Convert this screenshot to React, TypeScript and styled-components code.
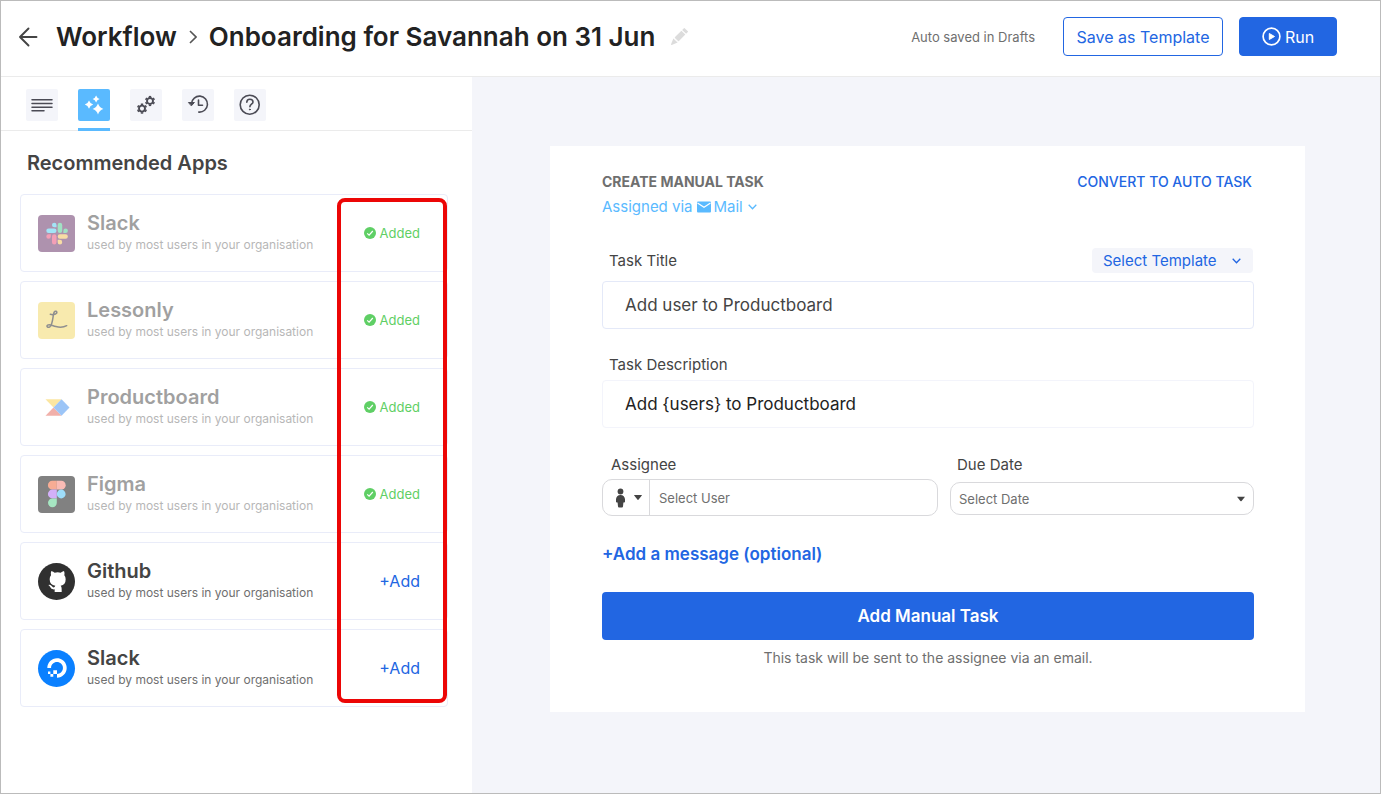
import React from 'react';
import styled, { createGlobalStyle, css } from 'styled-components';
import { BsPencilFill } from 'react-icons/bs';
import { FaDigitalOcean } from 'react-icons/fa';

const color = {
  ink: '#222222',
  dark: '#444444',
  mid: '#6f6f6f',
  blue: '#2266e2',
  sky: '#5abaff',
  green: '#5fcf65',
  page: '#f4f5fa',
  line: '#ebebeb',
  cardLine: '#e9ecf9',
  red: '#ec0606',
};

const GlobalStyle = createGlobalStyle`
  *, *::before, *::after { box-sizing: border-box; }
  body { margin: 0; font-family: Inter, "Open Sans", sans-serif; color: ${color.dark}; background: #fff; }
  h1, h2, h3, p, ul { margin: 0; padding: 0; }
  ul { list-style: none; }
  svg { display: block; flex: none; }
  button, input, select { font: inherit; color: inherit; margin: 0; }
  button { cursor: pointer; }
`;

const Page = styled.div`
  display: flex;
  flex-direction: column;
  min-height: 100vh;
  border: 1px solid #bbbbbb;
`;

/* Header */

const Header = styled.header`
  display: flex;
  align-items: center;
  padding: 16px 43px 20px 17px;
  border-bottom: 1px solid ${color.line};
`;

const IconButton = styled.button`
  display: flex;
  padding: 0;
  border: 0;
  background: none;
  color: ${(p) => p.color ?? color.dark};
`;

const Title = styled.h1`
  display: flex;
  align-items: center;
  gap: 12px;
  margin: 0 16px 0 18px;
  font-size: 26px;
  line-height: 32px;
  font-weight: 600;
  color: ${color.ink};
  white-space: nowrap;
`;

const SaveState = styled.p`
  margin-left: auto;
  font-size: 13px;
  line-height: 20px;
  color: ${color.mid};
`;

const HeaderButton = styled.button<{ $primary?: boolean }>`
  display: flex;
  align-items: center;
  justify-content: center;
  gap: 4px;
  height: 39px;
  border: 1px solid ${color.blue};
  border-radius: 4px;
  font-size: 16px;
  white-space: nowrap;
  ${(p) =>
    p.$primary
      ? css`
          width: 98px;
          margin-left: 16px;
          background: ${color.blue};
          color: #fff;
        `
      : css`
          width: 160px;
          margin-left: 28px;
          background: #fff;
          color: ${color.blue};
        `}
`;

/* Body */

const Body = styled.div`
  display: flex;
  flex: 1;
`;

const Sidebar = styled.aside`
  flex: 0 0 471px;
  background: #fff;
`;

const Tabs = styled.nav`
  display: flex;
  gap: 20px;
  padding: 12px 25px 0;
  border-bottom: 1px solid ${color.line};
`;

const Tab = styled.button<{ $active?: boolean }>`
  padding: 0 0 7px;
  margin-bottom: -1px;
  border: 0;
  border-bottom: 3px solid ${(p) => (p.$active ? color.sky : 'transparent')};
  background: none;
  color: ${(p) => (p.$active ? '#fff' : '#4b4b55')};
`;

const TabTile = styled.span<{ $active?: boolean }>`
  display: flex;
  width: 32px;
  height: 32px;
  border-radius: 2px;
  background: ${(p) => (p.$active ? color.sky : color.page)};
`;

const SidebarTitle = styled.h2`
  padding: 20px 26px 18px;
  font-size: 20px;
  line-height: 25px;
  font-weight: 600;
`;

const AppListFrame = styled.div`
  position: relative;
  margin: 0 24px 24px 19px;
`;

const AppList = styled.ul`
  display: grid;
  gap: 9px;
`;

const AppCard = styled.li`
  display: flex;
  align-items: center;
  height: 78px;
  padding: 0 27px 0 17px;
  border: 1px solid ${color.cardLine};
  border-radius: 4px;
`;

const AppInfo = styled.div<{ $faded: boolean }>`
  display: flex;
  flex: 1;
  align-items: center;
  gap: 12px;
  opacity: ${(p) => (p.$faded ? 0.5 : 1)};
`;

const AppName = styled.h3`
  font-size: 20px;
  line-height: 24px;
  font-weight: 600;
`;

const AppNote = styled.p`
  font-size: 12px;
  line-height: 20px;
  color: ${color.mid};
`;

const Added = styled.span`
  display: flex;
  align-items: center;
  gap: 4px;
  font-size: 13px;
  color: ${color.green};
`;

const AddButton = styled.button`
  padding: 0;
  border: 0;
  background: none;
  font-size: 16px;
  color: ${color.blue};
`;

const Highlight = styled.div`
  position: absolute;
  top: 4px;
  right: 1px;
  bottom: 4px;
  width: 110px;
  border: 4px solid ${color.red};
  border-radius: 8px;
  pointer-events: none;
`;

/* Task form */

const Main = styled.main`
  flex: 1;
  padding: 69px 75px 69px 78px;
  background: ${color.page};
`;

const TaskCard = styled.form`
  display: flex;
  flex-direction: column;
  padding: 26px 51px 44px 52px;
  background: #fff;
  line-height: 20px;
  font-size: 14px;
`;

const Row = styled.div`
  display: flex;
  align-items: center;
  justify-content: space-between;
`;

const CardTitle = styled.h2`
  font-size: 14px;
  font-weight: 700;
  color: ${color.mid};
`;

const ConvertLink = styled.a`
  padding-right: 2px;
  font-weight: 500;
  color: ${color.blue};
  text-decoration: none;
`;

const AssignedVia = styled.label`
  display: flex;
  align-items: center;
  gap: 4px;
  margin-top: 5px;
  font-size: 15px;
  color: ${color.sky};
`;

const MailPicker = styled.span`
  position: relative;
  display: flex;
  align-items: center;
  gap: 3px;
`;

const BareSelect = styled.select`
  appearance: none;
  width: 100%;
  height: 100%;
  padding: 0;
  border: 0;
  background: none;
  outline-offset: 2px;
`;

const MailSelect = styled(BareSelect)`
  width: 44px;
  height: 20px;
`;

const MailMark = styled.span`
  position: absolute;
  right: 1px;
  pointer-events: none;
`;

const TitleRow = styled(Row)`
  margin: 31px 1px 8px 7px;
`;

const FieldLabel = styled.label`
  display: block;
  padding-left: 7px;
  font-size: 15px;
  color: ${color.dark};
`;

const TitleLabel = styled(FieldLabel)`
  padding-left: 0;
`;

const TemplatePicker = styled.div`
  position: relative;
  width: 161px;
  height: 25px;
  border-radius: 4px;
  background: ${color.page};
  font-size: 15px;
  color: ${color.blue};
`;

const TemplateSelect = styled(BareSelect)`
  padding: 0 32px 0 11px;
`;

const PickerMark = styled.span`
  position: absolute;
  right: 8px;
  top: 50%;
  transform: translateY(-50%);
  pointer-events: none;
`;

const TemplateMark = styled(PickerMark)`
  right: 12px;
`;

const TextBox = styled.input<{ $strong?: boolean }>`
  width: 100%;
  height: 48px;
  padding: 0 22px;
  border: 1px solid ${(p) => (p.$strong ? '#f3f4fb' : '#e4e9f8')};
  border-radius: 4px;
  background: #fff;
  font-size: 17px;
  color: ${(p) => (p.$strong ? color.ink : color.dark)};
`;

const DescriptionField = styled.div`
  display: grid;
  gap: 5px;
  margin-top: 26px;
`;

const Columns = styled.div`
  display: grid;
  grid-template-columns: 336fr 304fr;
  gap: 12px;
  margin-top: 27px;
`;

const Column = styled.div`
  display: flex;
  flex-direction: column;
  justify-content: space-between;
  gap: 4px;
`;

const AssigneeLabel = styled(FieldLabel)`
  padding-left: 9px;
`;

const AssigneeBox = styled.div`
  display: flex;
  height: 37px;
  border: 1px solid #d9d9dc;
  border-radius: 10px;
  overflow: hidden;
`;

const KindButton = styled.button`
  display: flex;
  flex: none;
  align-items: center;
  gap: 8px;
  width: 47px;
  padding: 0 0 0 12px;
  border: 0;
  border-right: 1px solid #d9d9dc;
  background: none;
`;

const UserInput = styled.input`
  flex: 1;
  min-width: 0;
  padding: 0 9px;
  border: 0;
  background: none;
  font-size: 13px;
  &::placeholder { color: ${color.mid}; opacity: 1; }
`;

const DateBox = styled.div`
  position: relative;
  height: 33px;
  margin-bottom: 1px;
  border: 1px solid #d9d9dc;
  border-radius: 10px;
  font-size: 13px;
  color: ${color.mid};
`;

const DateSelect = styled(BareSelect)`
  padding: 0 28px 0 8px;
`;

const MessageButton = styled.button`
  align-self: flex-start;
  margin: 28px 0;
  padding: 0;
  border: 0;
  background: none;
  font-size: 17px;
  line-height: 20px;
  font-weight: 600;
  color: ${color.blue};
`;

const SubmitButton = styled.button`
  height: 48px;
  border: 0;
  border-radius: 4px;
  background: ${color.blue};
  font-size: 17px;
  font-weight: 600;
  color: #fff;
`;

const FormNote = styled.p`
  margin-top: 8px;
  text-align: center;
  color: ${color.mid};
`;

/* Icons */

const BackIcon = () => (
  <svg width="20" height="20" viewBox="0 0 20 20" fill="none" stroke="currentColor" strokeWidth="1.900" strokeLinecap="round" strokeLinejoin="round">
    <path d="M18.500 10H2M10.500 1.500 2 10l8.500 8.500" />
  </svg>
);

const CrumbIcon = () => (
  <svg width="8" height="14" viewBox="0 0 8 14" fill="none" stroke="#555" strokeWidth="1.600">
    <path d="M1 1l6 6-6 6" />
  </svg>
);

const PlayIcon = () => (
  <svg width="19" height="19" viewBox="0 0 19 19">
    <circle cx="9.500" cy="9.500" r="8.400" fill="none" stroke="#fff" strokeWidth="1.700" />
    <path d="M7.300 6.500v6l5.200-3z" fill="#fff" stroke="#fff" strokeLinejoin="round" />
  </svg>
);

const LinesIcon = () => (
  <svg width="32" height="32" viewBox="0 0 32 32" fill="none" stroke="currentColor" strokeWidth="1.500" strokeLinecap="round">
    <path d="M6 10.800h20M6 14.500h20M6 18.300h20M6 21.800h12" />
  </svg>
);

const star = (x: number, y: number, r: number) => {
  const k = r * 0.25;
  return `M${x} ${y - r}Q${x + k} ${y - k} ${x + r} ${y}Q${x + k} ${y + k} ${x} ${y + r}Q${x - k} ${y + k} ${x - r} ${y}Q${x - k} ${y - k} ${x} ${y - r}Z`;
};

const SparkleIcon = () => (
  <svg width="32" height="32" viewBox="0 0 32 32" fill="currentColor">
    <path d={star(20, 20, 5.4) + star(11, 15.6, 4.2) + star(18.1, 10, 3.5)} />
  </svg>
);

const Gear = ({ x, y }: { x: number; y: number }) => (
  <g transform={`translate(${x} ${y})`} stroke="currentColor" fill="none">
    <circle r="3" strokeWidth="1.900" />
    {[0, 60, 120, 180, 240, 300].map((a) => (
      <path key={a} d="M0-3.600V-5.100" strokeWidth="2.400" transform={`rotate(${a})`} />
    ))}
  </g>
);

const GearsIcon = () => (
  <svg width="32" height="32" viewBox="0 0 32 32">
    <Gear x={20} y={12} />
    <Gear x={12} y={19.6} />
  </svg>
);

const HistoryIcon = () => (
  <svg width="32" height="32" viewBox="0 0 32 32" fill="none" stroke="currentColor" strokeWidth="1.600" strokeLinecap="round" strokeLinejoin="round">
    <path d="M9.500 14.500a8 8 0 1 1 7.300 8.600M16.500 11v5.300h4" />
    <path d="M6.800 13.500h5.600l-2.800 3.100z" fill="currentColor" strokeWidth="1" />
  </svg>
);

const HelpIcon = () => (
  <svg width="32" height="32" viewBox="0 0 32 32" fill="none" stroke="currentColor" strokeWidth="1.600" strokeLinecap="round">
    <circle cx="15.700" cy="15.700" r="9.500" />
    <path d="M12.800 13.300c0-4.200 6.200-3.900 6.200-.3 0 2.200-3.100 2.300-3.100 4.700" />
    <circle cx="15.900" cy="20.500" r=".5" fill="currentColor" strokeWidth="1" />
  </svg>
);

const CheckIcon = () => (
  <svg width="12" height="12" viewBox="0 0 12 12">
    <circle cx="6" cy="6" r="6" fill={color.green} />
    <path d="M3.200 6.300l1.900 1.900 3.700-4.200" fill="none" stroke="#fff" strokeWidth="1.200" />
  </svg>
);

const MailIcon = () => (
  <svg width="14" height="12" viewBox="0 0 14 12">
    <rect y=".5" width="14" height="11" rx="1" fill="currentColor" />
    <path d="M.5 2 7 6.200 13.500 2" fill="none" stroke="#fff" strokeWidth="1.200" />
  </svg>
);

const ChevronIcon = () => (
  <svg width="9" height="6" viewBox="0 0 9 6" fill="none" stroke="currentColor" strokeWidth="1.300">
    <path d="M.7.800l3.800 3.900L8.300.8" />
  </svg>
);

const CaretIcon = () => (
  <svg width="8" height="5" viewBox="0 0 8 5" fill={color.dark}>
    <path d="M.4 0h7.200q.5 0 .2.500L4.400 4.700q-.4.400-.8 0L.2.500Q-.1 0 .4 0z" />
  </svg>
);

const PersonIcon = () => (
  <svg width="11" height="20" viewBox="0 0 11 20" fill={color.dark}>
    <circle cx="5.500" cy="3.500" r="2.900" />
    <path d="M5.500 7C2.800 7 1 9 1 11.300v2.500c0 .8.900 1 1.600.6l.4 4.100q.1.900 1 .9h3q.9 0 1-.9l.4-4.100c.7.400 1.600.2 1.600-.6v-2.500C10 9 8.200 7 5.500 7z" />
  </svg>
);

const SlackLogo = () => (
  <svg width="37" height="37" viewBox="0 0 37 37">
    <rect width="37" height="37" rx="4" fill="#5f2860" />
    <g transform="translate(8.300 7.800) scale(.9)">
      <path fill="#e8416f" d="M5.042 15.165a2.528 2.528 0 0 1-2.520 2.523A2.528 2.528 0 0 1 0 15.165a2.527 2.527 0 0 1 2.522-2.520h2.520zM6.313 15.165a2.521 2.521 0 0 1 5.042 0v6.313a2.521 2.521 0 0 1-5.042 0z" />
      <path fill="#48cdf0" d="M8.834 5.042a2.521 2.521 0 1 1 2.521-2.520v2.520zM8.834 6.313a2.521 2.521 0 0 1 0 5.042H2.522a2.521 2.521 0 0 1 0-5.042z" />
      <path fill="#46c78b" d="M18.956 8.834a2.522 2.522 0 1 1 2.522 2.521h-2.522zM17.688 8.834a2.523 2.523 0 0 1-5.043 0V2.522a2.522 2.522 0 0 1 5.043 0z" />
      <path fill="#f2bd4e" d="M15.165 18.956a2.522 2.522 0 1 1-2.520 2.522v-2.522zM15.165 17.688a2.522 2.522 0 0 1 0-5.043h6.313a2.522 2.522 0 0 1 0 5.043z" />
    </g>
  </svg>
);

const LessonlyLogo = () => (
  <svg width="37" height="37" viewBox="0 0 37 37">
    <rect width="37" height="37" rx="4" fill="#f3d75f" />
    <path d="M12.300 12.300c3.200.9 7-.2 6.500-2.300-.6-1.700-2.600-.7-3.200 1.500-.8 4-.9 11-3.800 13.300-1.900 1.400-3.900-.5-2.200-1.700 2.100-1.400 4.700.7 8.300 1.500 3.600.8 7.600.8 10.800-.9" fill="none" stroke="#222" strokeWidth="1.500" strokeLinecap="round" />
  </svg>
);

const ProductboardLogo = () => (
  <svg width="37" height="37" viewBox="0 0 37 37">
    <path d="M7.500 10.300h16l-8 8.200z" fill="#f9cf45" />
    <path d="M7.500 26.700h16l-8-8.200z" fill="#e56457" />
    <path d="M23.500 10.300l8 8.200-8 8.200-8-8.200z" fill="#3b8cf0" />
  </svg>
);

const FigmaLogo = () => (
  <svg width="37" height="37" viewBox="0 0 37 37">
    <rect width="37" height="37" rx="4" fill="#050505" />
    <path d="M18.800 4.800h-4.500a4.400 4.400 0 0 0 0 8.800h4.500z" fill="#f05c2c" />
    <path d="M18.800 4.800h4.500a4.400 4.400 0 0 1 0 8.800h-4.500z" fill="#f57a6d" />
    <path d="M18.800 13.600h-4.500a4.400 4.400 0 0 0 0 8.800h4.500z" fill="#a863f2" />
    <circle cx="23.200" cy="18" r="4.400" fill="#3fbcf7" />
    <path d="M18.800 22.400h-4.500a4.400 4.400 0 1 0 4.500 4.400z" fill="#4fce86" />
  </svg>
);

const GithubLogo = () => (
  <svg width="37" height="37" viewBox="0 0 111 111">
    <circle cx="55.500" cy="55.500" r="55.500" fill="#303030" />
    <path d="M40 24Q46 26 50 29Q59 27 68 29Q72 26 78 24Q81 31 79 37Q83 42 83 49Q83 66 68 68Q71 71 71 77V87H50V79Q39 80 37 73Q35 68 31 66Q38 64 42 70Q45 75 50 72Q50 70 52 68Q35 66 35 49Q35 42 39 37Q37 31 40 24Z" fill="#fff" />
  </svg>
);

const OceanLogo = styled.span`
  display: flex;
  align-items: center;
  justify-content: center;
  width: 37px;
  height: 37px;
  border-radius: 50%;
  background: #0a80ff;
  color: #fff;
`;

/* Data */

const tabs = [
  { label: 'Details', icon: <LinesIcon /> },
  { label: 'Recommended apps', icon: <SparkleIcon />, active: true },
  { label: 'Settings', icon: <GearsIcon /> },
  { label: 'History', icon: <HistoryIcon /> },
  { label: 'Help', icon: <HelpIcon /> },
];

const apps = [
  { name: 'Slack', logo: <SlackLogo />, added: true },
  { name: 'Lessonly', logo: <LessonlyLogo />, added: true },
  { name: 'Productboard', logo: <ProductboardLogo />, added: true },
  { name: 'Figma', logo: <FigmaLogo />, added: true },
  { name: 'Github', logo: <GithubLogo />, added: false },
  { name: 'Slack', logo: <OceanLogo><FaDigitalOcean size={20} /></OceanLogo>, added: false },
];

export default function App() {
  return (
    <Page>
      <GlobalStyle />
      <Header>
        <IconButton aria-label="Back"><BackIcon /></IconButton>
        <Title>
          <span>Workflow</span>
          <CrumbIcon />
          <span>Onboarding for Savannah on 31 Jun</span>
        </Title>
        <IconButton aria-label="Rename workflow" color="#dcdcdc"><BsPencilFill size={17} /></IconButton>
        <SaveState>Auto saved in Drafts</SaveState>
        <HeaderButton>Save as Template</HeaderButton>
        <HeaderButton $primary><PlayIcon />Run</HeaderButton>
      </Header>
      <Body>
        <Sidebar>
          <Tabs>
            {tabs.map((t) => (
              <Tab key={t.label} aria-label={t.label} $active={t.active}>
                <TabTile $active={t.active}>{t.icon}</TabTile>
              </Tab>
            ))}
          </Tabs>
          <SidebarTitle>Recommended Apps</SidebarTitle>
          <AppListFrame>
            <AppList>
              {apps.map((app, i) => (
                <AppCard key={i}>
                  <AppInfo $faded={app.added}>
                    {app.logo}
                    <div>
                      <AppName>{app.name}</AppName>
                      <AppNote>used by most users in your organisation</AppNote>
                    </div>
                  </AppInfo>
                  {app.added ? <Added><CheckIcon />Added</Added> : <AddButton>+Add</AddButton>}
                </AppCard>
              ))}
            </AppList>
            <Highlight />
          </AppListFrame>
        </Sidebar>
        <Main>
          <TaskCard onSubmit={(e: React.FormEvent) => e.preventDefault()}>
            <Row>
              <CardTitle>CREATE MANUAL TASK</CardTitle>
              <ConvertLink href="#auto">CONVERT TO AUTO TASK</ConvertLink>
            </Row>
            <AssignedVia>
              Assigned via
              <MailPicker>
                <MailIcon />
                <MailSelect><option>Mail</option></MailSelect>
                <MailMark><ChevronIcon /></MailMark>
              </MailPicker>
            </AssignedVia>
            <TitleRow>
              <TitleLabel htmlFor="task-title">Task Title</TitleLabel>
              <TemplatePicker>
                <TemplateSelect aria-label="Template"><option>Select Template</option></TemplateSelect>
                <TemplateMark><ChevronIcon /></TemplateMark>
              </TemplatePicker>
            </TitleRow>
            <TextBox id="task-title" defaultValue="Add user to Productboard" />
            <DescriptionField>
              <FieldLabel htmlFor="task-description">Task Description</FieldLabel>
              <TextBox id="task-description" $strong defaultValue="Add {users} to Productboard" />
            </DescriptionField>
            <Columns>
              <Column>
                <AssigneeLabel htmlFor="assignee">Assignee</AssigneeLabel>
                <AssigneeBox>
                  <KindButton type="button" aria-label="Assignee type"><PersonIcon /><CaretIcon /></KindButton>
                  <UserInput id="assignee" placeholder="Select User" />
                </AssigneeBox>
              </Column>
              <Column>
                <FieldLabel htmlFor="due-date">Due Date</FieldLabel>
                <DateBox>
                  <DateSelect id="due-date"><option>Select Date</option></DateSelect>
                  <PickerMark><CaretIcon /></PickerMark>
                </DateBox>
              </Column>
            </Columns>
            <MessageButton type="button">+Add a message (optional)</MessageButton>
            <SubmitButton type="submit">Add Manual Task</SubmitButton>
            <FormNote>This task will be sent to the assignee via an email.</FormNote>
          </TaskCard>
        </Main>
      </Body>
    </Page>
  );
}
